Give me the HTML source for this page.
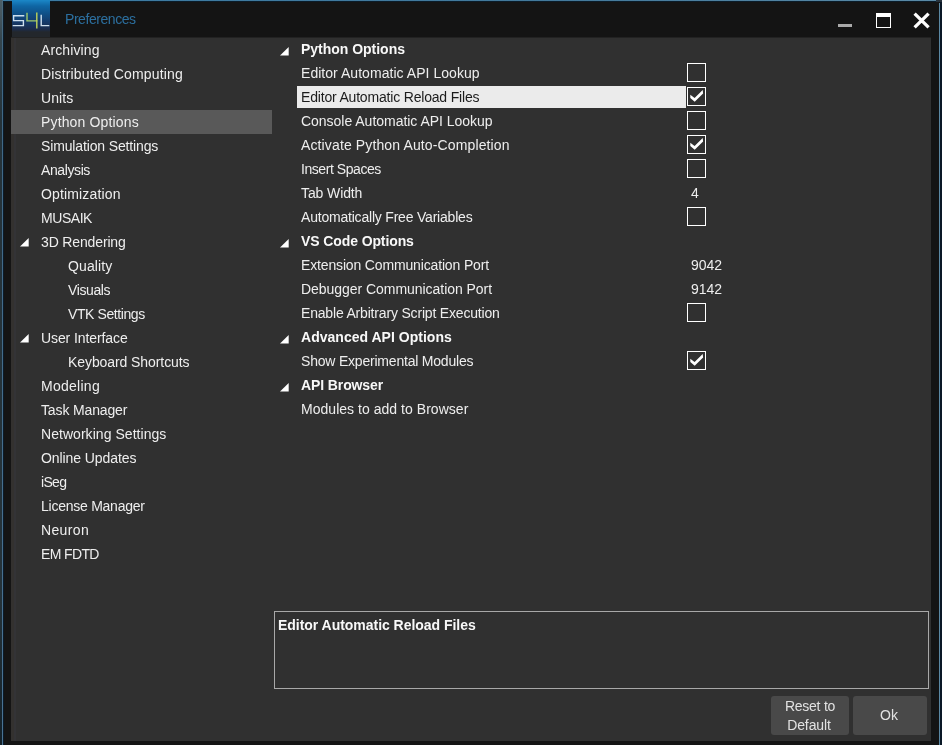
<!DOCTYPE html><html><head><meta charset="utf-8"><title>Preferences</title><style>
*{box-sizing:border-box}
html,body{margin:0;padding:0}
body{width:942px;height:745px;overflow:hidden;background:#141414;position:relative;font-family:"Liberation Sans",sans-serif;font-size:14px;color:#eeeeee}
.abs{position:absolute}
.t{position:absolute;white-space:nowrap;line-height:24px;height:24px;will-change:transform}
.b{font-weight:bold;color:#f8f8f8}
.cb{position:absolute;left:687px;width:19px;height:19px;border:1.4px solid #fff}
.tri{position:absolute;width:9px;height:9px}
.btn{position:absolute;background:#494949;border-radius:3px;color:#e2e2e2;text-align:center;will-change:transform}
</style></head><body>
<div class="abs" style="left:0;top:0;width:2px;height:745px;background:linear-gradient(#4c5f69 0px,#45565f 15px,#33454e 40px,#25333a 120px,#25333a 600px,#142129 745px)"></div>
<div class="abs" style="left:2px;top:0;width:1px;height:745px;background:linear-gradient(#4c6a7c 0px,#3f6785 60px,#4a7394 745px)"></div>
<div class="abs" style="left:3px;top:1px;width:1px;height:744px;background:#0c1b28"></div>
<div class="abs" style="left:939px;top:3px;width:1px;height:742px;background:#5b88a3"></div>
<div class="abs" style="left:940px;top:0;width:2px;height:745px;background:#0a1826"></div>
<div class="abs" style="left:936px;top:0;width:6px;height:2px;background:#27323c"></div>
<div class="abs" style="left:3px;top:0;width:933px;height:1px;background:linear-gradient(90deg,#3b7ba3 0%,#43799b 60%,#5a8aa6 100%)"></div>
<div class="abs" style="left:4px;top:1px;width:932px;height:1px;background:#0b1c29"></div>
<div class="abs" style="left:11px;top:37px;width:920px;height:704px;background:#303030"></div>
<div class="abs" style="left:11px;top:37px;width:920px;height:1px;background:#222222"></div>
<div class="abs" style="left:11px;top:38px;width:3px;height:703px;background:#33312f"></div>
<div class="abs" style="left:14px;top:38px;width:2px;height:703px;background:#333336"></div>
<div class="abs" style="left:12px;top:0;width:38px;height:37px;background:linear-gradient(#1b88c8 0px,#0f66a4 6px,#0f4f86 14px,#153a6a 22px,#1b2c4c 29px,#23272c 32px,#23272c 37px)"></div>
<svg class="abs" style="left:12px;top:0" width="38" height="37" viewBox="12 0 38 37"><g fill="none" stroke-width="1.4" stroke-linecap="square" opacity="0.93">
<path d="M23.6 15.8H13.6V20.6H23.4V25.6H13.4" stroke="#dcebf8"/>
<path d="M27 13.4V20.9H36.6" stroke="#a9d26a"/>
<path d="M36.8 13.2V27.8" stroke="#c9de58"/>
<path d="M41.2 15.4V25.6H48.6" stroke="#dcebf8"/>
</g></svg>
<div class="t" style="left:65px;top:7px;color:#2c6f9f;letter-spacing:-0.444px">Preferences</div>
<div class="abs" style="left:838px;top:24px;width:14px;height:3px;background:#a9a9a9"></div>
<div class="abs" style="left:876px;top:13px;width:15px;height:15px;border:1.5px solid #fff;border-top-width:4px"></div>
<svg class="abs" style="left:912px;top:11px" width="20" height="20" viewBox="912 11 20 20"><path d="M914.6 13.6L928.6 27.4M928.6 13.6L914.6 27.4" stroke="#fff" stroke-width="3.3" fill="none"/></svg>
<div class="abs" style="left:11px;top:110px;width:261px;height:24px;background:#595959"></div>
<div class="t" style="left:41px;top:38px;letter-spacing:0.118px">Archiving</div>
<div class="t" style="left:41px;top:62px;letter-spacing:0.161px">Distributed Computing</div>
<div class="t" style="left:41px;top:86px;letter-spacing:0.079px">Units</div>
<div class="t" style="left:41px;top:110px;letter-spacing:0.151px">Python Options</div>
<div class="t" style="left:41px;top:134px;letter-spacing:-0.138px">Simulation Settings</div>
<div class="t" style="left:41px;top:158px;letter-spacing:-0.396px">Analysis</div>
<div class="t" style="left:41px;top:182px;letter-spacing:0.148px">Optimization</div>
<div class="t" style="left:41px;top:206px;letter-spacing:-0.445px">MUSAIK</div>
<div class="t" style="left:41px;top:230px;letter-spacing:-0.144px">3D Rendering</div>
<svg class="abs" style="left:20.2px;top:237.8px" width="9" height="9" viewBox="0 0 9 9"><path d="M8.7 0V8.6H0Z" fill="#fff"/></svg>
<div class="t" style="left:68px;top:254px;letter-spacing:0.109px">Quality</div>
<div class="t" style="left:68px;top:278px;letter-spacing:-0.387px">Visuals</div>
<div class="t" style="left:68px;top:302px;letter-spacing:-0.406px">VTK Settings</div>
<div class="t" style="left:41px;top:326px;letter-spacing:-0.097px">User Interface</div>
<svg class="abs" style="left:20.2px;top:333.8px" width="9" height="9" viewBox="0 0 9 9"><path d="M8.7 0V8.6H0Z" fill="#fff"/></svg>
<div class="t" style="left:68px;top:350px;letter-spacing:-0.079px">Keyboard Shortcuts</div>
<div class="t" style="left:41px;top:374px;letter-spacing:0.266px">Modeling</div>
<div class="t" style="left:41px;top:398px;letter-spacing:-0.136px">Task Manager</div>
<div class="t" style="left:41px;top:422px;letter-spacing:0.045px">Networking Settings</div>
<div class="t" style="left:41px;top:446px;letter-spacing:-0.081px">Online Updates</div>
<div class="t" style="left:41px;top:470px;letter-spacing:-0.675px">iSeg</div>
<div class="t" style="left:41px;top:494px;letter-spacing:-0.248px">License Manager</div>
<div class="t" style="left:41px;top:518px;letter-spacing:0.350px">Neuron</div>
<div class="t" style="left:41px;top:542px;letter-spacing:-0.629px">EM FDTD</div>
<div class="t b" style="left:301px;top:37px;letter-spacing:-0.019px">Python Options</div>
<svg class="abs" style="left:279.6px;top:46.5px" width="9" height="9" viewBox="0 0 9 9"><path d="M8.7 0V8.6H0Z" fill="#fff"/></svg>
<div class="t" style="left:301px;top:61px;letter-spacing:0.042px">Editor Automatic API Lookup</div>
<div class="cb" style="top:63px"></div>
<div class="abs" style="left:297px;top:86px;width:389px;height:22px;background:#ebebeb"></div>
<div class="t" style="left:301px;top:85px;color:#1c1c1c;letter-spacing:-0.184px">Editor Automatic Reload Files</div>
<div class="cb" style="top:87px"></div>
<svg class="abs" style="left:687px;top:87px" width="19" height="19" viewBox="0 0 19 19"><path d="M3.3 7.7L7.6 10.9L15.7 3.0L16.1 6.6L7.7 14.7L3.3 11.0Z" fill="#fff"/></svg>
<div class="t" style="left:301px;top:109px;letter-spacing:-0.023px">Console Automatic API Lookup</div>
<div class="cb" style="top:111px"></div>
<div class="t" style="left:301px;top:133px;letter-spacing:0.128px">Activate Python Auto-Completion</div>
<div class="cb" style="top:135px"></div>
<svg class="abs" style="left:687px;top:135px" width="19" height="19" viewBox="0 0 19 19"><path d="M3.3 7.7L7.6 10.9L15.7 3.0L16.1 6.6L7.7 14.7L3.3 11.0Z" fill="#fff"/></svg>
<div class="t" style="left:301px;top:157px;letter-spacing:-0.438px">Insert Spaces</div>
<div class="cb" style="top:159px"></div>
<div class="t" style="left:301px;top:181px;letter-spacing:-0.105px">Tab Width</div>
<div class="t" style="left:690.5px;top:181px">4</div>
<div class="t" style="left:301px;top:205px;letter-spacing:-0.203px">Automatically Free Variables</div>
<div class="cb" style="top:207px"></div>
<div class="t b" style="left:301px;top:229px;letter-spacing:-0.103px">VS Code Options</div>
<svg class="abs" style="left:279.6px;top:238.5px" width="9" height="9" viewBox="0 0 9 9"><path d="M8.7 0V8.6H0Z" fill="#fff"/></svg>
<div class="t" style="left:301px;top:253px;letter-spacing:-0.152px">Extension Communication Port</div>
<div class="t" style="left:690.5px;top:253px">9042</div>
<div class="t" style="left:301px;top:277px;letter-spacing:-0.043px">Debugger Communication Port</div>
<div class="t" style="left:690.5px;top:277px">9142</div>
<div class="t" style="left:301px;top:301px;letter-spacing:-0.181px">Enable Arbitrary Script Execution</div>
<div class="cb" style="top:303px"></div>
<div class="t b" style="left:301px;top:325px;letter-spacing:0.020px">Advanced API Options</div>
<svg class="abs" style="left:279.6px;top:334.5px" width="9" height="9" viewBox="0 0 9 9"><path d="M8.7 0V8.6H0Z" fill="#fff"/></svg>
<div class="t" style="left:301px;top:349px;letter-spacing:-0.204px">Show Experimental Modules</div>
<div class="cb" style="top:351px"></div>
<svg class="abs" style="left:687px;top:351px" width="19" height="19" viewBox="0 0 19 19"><path d="M3.3 7.7L7.6 10.9L15.7 3.0L16.1 6.6L7.7 14.7L3.3 11.0Z" fill="#fff"/></svg>
<div class="t b" style="left:301px;top:373px;letter-spacing:-0.107px">API Browser</div>
<svg class="abs" style="left:279.6px;top:382.5px" width="9" height="9" viewBox="0 0 9 9"><path d="M8.7 0V8.6H0Z" fill="#fff"/></svg>
<div class="t" style="left:301px;top:397px;letter-spacing:0.032px">Modules to add to Browser</div>
<div class="abs" style="left:274px;top:611px;width:655px;height:78px;border:1px solid #a8a8a8"></div>
<div class="t b" style="left:278px;top:613px;letter-spacing:-0.031px">Editor Automatic Reload Files</div>
<div class="btn" style="left:771px;top:696px;width:78px;height:39px;line-height:19px;padding-top:1px"><span style="letter-spacing:-0.25px">Reset to</span><br><span style="letter-spacing:-0.1px;margin-left:-2px">Default</span></div>
<div class="btn" style="left:853px;top:696px;width:74px;height:39px;line-height:39px;padding-right:2px">Ok</div>
</body></html>
